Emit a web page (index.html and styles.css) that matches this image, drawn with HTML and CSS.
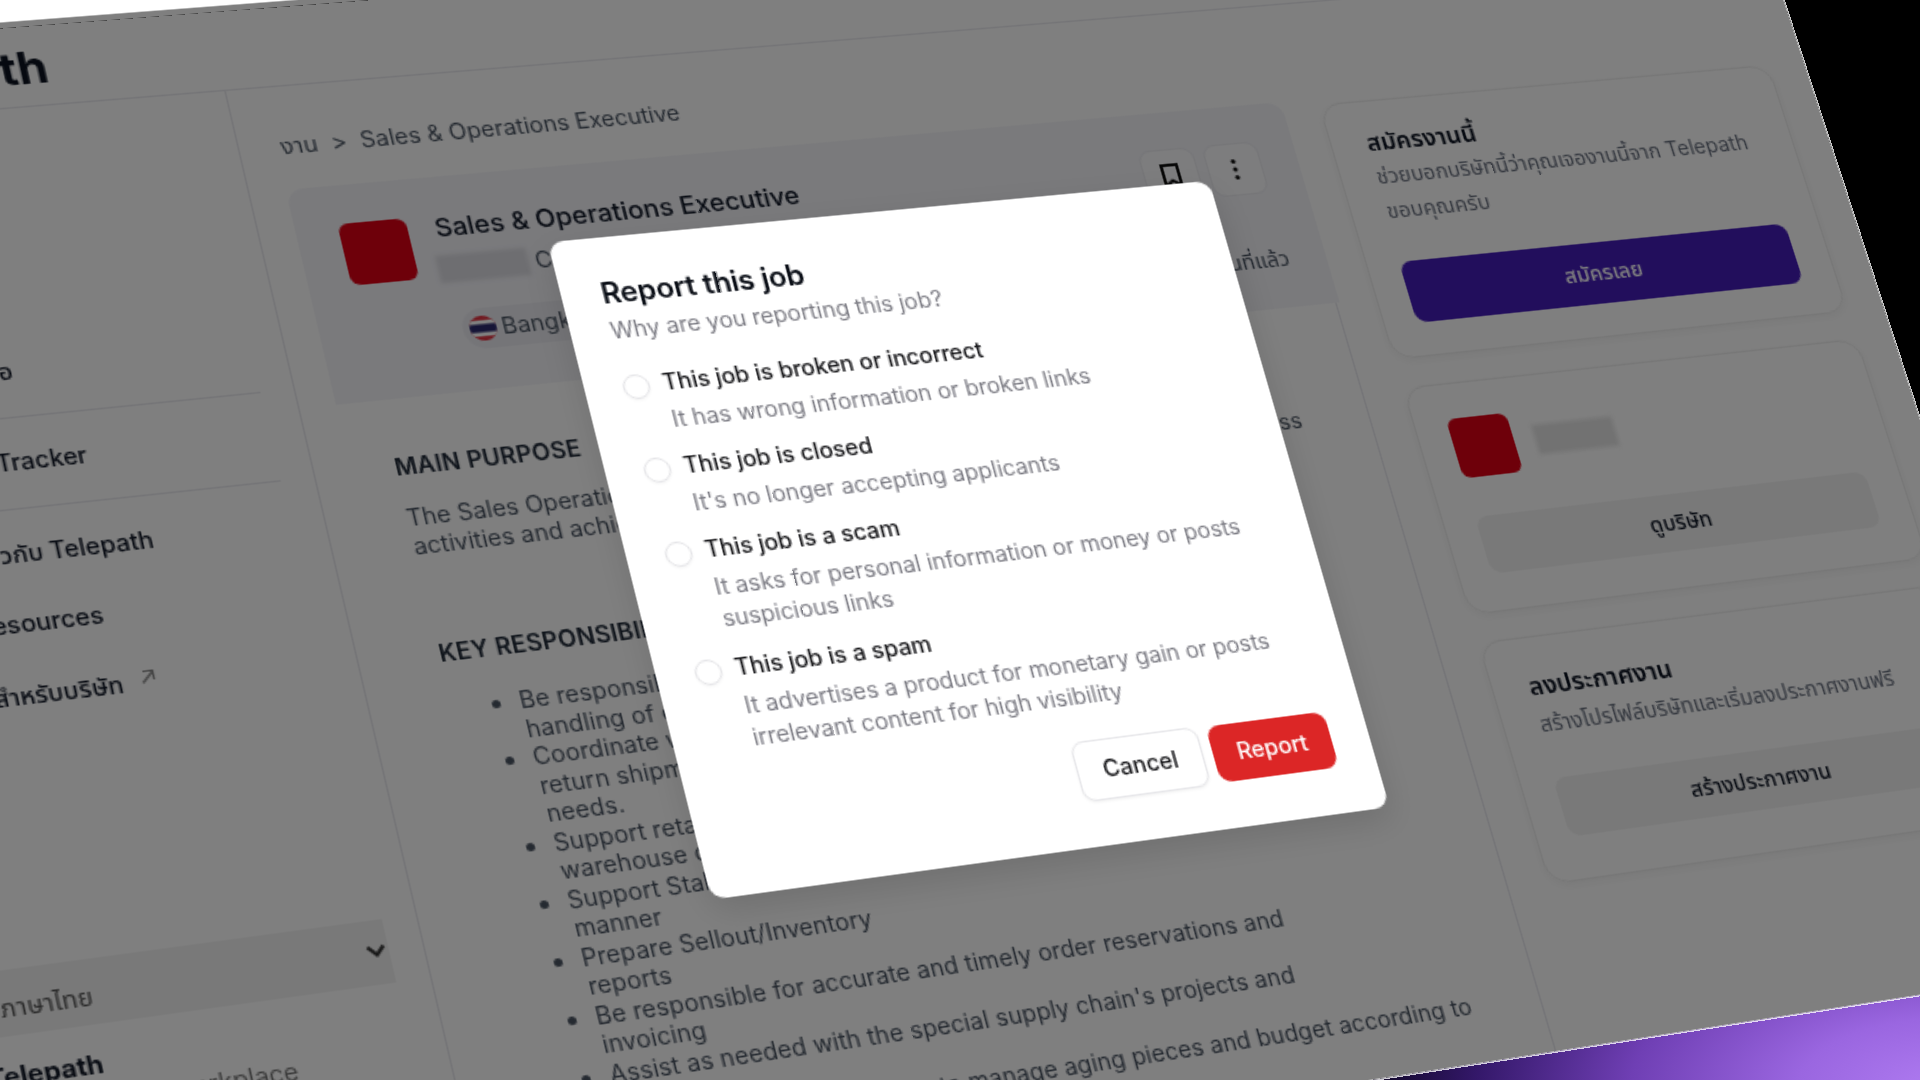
FILE: index.html
```html
<!DOCTYPE html>
<html lang="th">
<head>
<meta charset="utf-8">
<title>Telepath</title>
<link rel="stylesheet" href="styles.css">
</head>
<body>
<div class="scene">
<div class="stage">
  <div class="strip"></div>
  <header class="topbar"><span class="brand">Telepath</span></header>
  <div class="layout">
    <aside class="sidebar">
      <div class="nav-item nav-first">ประวัติย่อ</div>
      <div class="nav-line nav-line-a"></div>
      <div class="nav-item nav-tracker">Job Tracker</div>
      <div class="nav-line nav-line-b"></div>
      <div class="nav-item nav-about">เกี่ยวกับ Telepath</div>
      <div class="nav-item nav-res">Resources</div>
      <div class="nav-item nav-co">สำหรับบริษัท
        <svg class="ext" viewBox="0 0 12 12"><path d="M3 9.5 9.5 3M4 2.5h5.5V8"/></svg>
      </div>
      <div class="lang">
        <span class="lang-text">ภาษาไทย</span>
        <svg class="chev" viewBox="0 0 14 14"><path d="M2.5 4.5 7 9.5l4.5-5"/></svg>
      </div>
      <div class="foot-name">Telepath</div>
      <div class="foot-sub">The modern workplace</div>
    </aside>
    <main class="main">
      <div class="crumbs"><span>งาน</span><span class="crumb-sep">&gt;</span><span>Sales &amp; Operations Executive</span></div>
      <section class="job-head">
        <div class="job-logo"></div>
        <div class="job-info">
          <div class="job-title">Sales &amp; Operations Executive</div>
          <div class="job-company"><span class="smudge"></span><span>Company</span></div>
          <div class="pill">
            <svg class="flag" viewBox="0 0 16 16"><defs><clipPath id="fc"><circle cx="8" cy="8" r="8"/></clipPath></defs><g clip-path="url(#fc)"><rect width="16" height="16" fill="#e2303f"/><rect y="2.8" width="16" height="10.4" fill="#fff"/><rect y="5.4" width="16" height="5.2" fill="#2d2a6e"/></g></svg>
            <span>Bangkok</span>
          </div>
        </div>
        <div class="job-side">
          <div class="job-actions">
            <div class="icon-btn"><svg viewBox="0 0 20 20"><path d="M5 3h10v14l-5-3.4L5 17z"/></svg></div>
            <div class="icon-btn"><svg viewBox="0 0 20 20"><circle class="dot" cx="10" cy="4.5" r="1.5"/><circle class="dot" cx="10" cy="10" r="1.5"/><circle class="dot" cx="10" cy="15.5" r="1.5"/></svg></div>
          </div>
          <div class="job-time">3 วันที่แล้ว</div>
        </div>
      </section>
      <section class="job-body">
        <h3 class="sec-title">MAIN PURPOSE</h3>
        <p class="para">The Sales Operations Executive supports the sales team across all related business<br>activities and achieves the targets set by the company.</p>
        <h3 class="sec-title sec-key">KEY RESPONSIBILITIES</h3>
        <ul class="duties">
          <li>Be responsible for order processing and the accurate<br>handling of customer requests</li>
          <li>Coordinate with logistics on deliveries and<br>return shipments to serve customer<br>needs.</li>
          <li>Support retail stores and<br>warehouse operations</li>
          <li>Support Stakeholders in a timely<br>manner</li>
          <li>Prepare Sellout/Inventory<br>reports</li>
          <li>Be responsible for accurate and timely order reservations and<br>invoicing</li>
          <li>Assist as needed with the special supply chain's projects and<br>agendas</li>
          <li>Coordinating with the team to manage aging pieces and budget according to<br>business plan across all</li>
        </ul>
      </section>
    </main>
    <aside class="rail">
      <section class="card card-apply">
        <h4 class="card-title">สมัครงานนี้</h4>
        <p class="card-sub">ช่วยบอกบริษัทนี้ว่าคุณเจองานนี้จาก Telepath<br>ขอบคุณครับ</p>
        <div class="btn-primary">สมัครเลย</div>
      </section>
      <section class="card card-company">
        <div class="co-row"><div class="co-logo"></div><div class="smudge smudge-co"></div></div>
        <div class="btn-soft btn-co">ดูบริษัท</div>
      </section>
      <section class="card card-post">
        <h4 class="card-title">ลงประกาศงาน</h4>
        <p class="card-sub card-sub-one">สร้างโปรไฟล์บริษัทและเริ่มลงประกาศงานฟรี</p>
        <div class="btn-soft btn-post">สร้างประกาศงาน</div>
      </section>
    </aside>
  </div>
  <div class="scrim"></div>
  <div class="modal">
    <h2 class="modal-title">Report this job</h2>
    <p class="modal-sub">Why are you reporting this job?</p>
    <div class="options">
      <div class="option"><span class="radio"></span><div><div class="opt-label">This job is broken or incorrect</div><div class="opt-desc">It has wrong information or broken links</div></div></div>
      <div class="option"><span class="radio"></span><div><div class="opt-label">This job is closed</div><div class="opt-desc">It's no longer accepting applicants</div></div></div>
      <div class="option"><span class="radio"></span><div><div class="opt-label">This job is a scam</div><div class="opt-desc">It asks for personal information or money or posts<br>suspicious links</div></div></div>
      <div class="option"><span class="radio"></span><div><div class="opt-label">This job is a spam</div><div class="opt-desc">It advertises a product for monetary gain or posts<br>irrelevant content for high visibility</div></div></div>
    </div>
    <div class="modal-actions"><div class="btn-cancel">Cancel</div><div class="btn-report">Report</div></div>
  </div>
</div>
</div>
</body>
</html>
```
FILE: styles.css
```css
* { box-sizing: border-box; }
html, body { margin: 0; height: 100%; }
body {
  width: 1920px; height: 1080px; overflow: hidden; position: relative;
  background: radial-gradient(ellipse 640px 300px at 1950px 1090px, #b07cf2 0%, #9a66e0 24%, #6f3fb4 50%, #34186a 74%, #0c0520 92%, #000 100%), #000;
  font-family: Inter, "Noto Sans", "Noto Sans Thai", "DejaVu Sans", sans-serif;
  color: #0f172a;
}
.scene { position: absolute; inset: 0; filter: blur(0.45px); }
.stage {
  position: absolute; left: 0; top: 0; width: 1247px; height: 750px;
  background: #fff; transform-origin: 0 0;
  transform: matrix3d(1.71796,-0.12881,0,0.00010631, 0.32909,1.49339,0,-0.00008786, 0,0,1,0, -212.09,44.18,0,0.97096);
  font-size: 14px; line-height: 20px;
  outline: 1.2px solid rgba(255,255,255,.8);
}
.strip { position: absolute; left: 0; right: 0; top: -70px; height: 70px; background: #fff; }
.scrim { position: absolute; inset: -4px 0 0 0; background: rgba(0,0,0,.5); }

.topbar { height: 52px; border-bottom: 1px solid #e9e9ee; padding: 9px 0 0 26px; }
.brand { font-size: 28px; line-height: 36px; font-weight: 700; color: #0b1220; }
.layout { display: grid; grid-template-columns: 244px 641px 362px; height: 698px; }

.sidebar { display: flex; flex-direction: column; padding: 0 19px 0 16px; border-right: 1px solid #e9e9ee; font-weight: 500; color: #111827; }
.nav-item { padding-left: 24px; height: 20px; white-space: nowrap; display: flex; align-items: center; gap: 8px; }
.nav-first { margin-top: 155px; padding-left: 20px; }
.nav-line { height: 1px; background: #e9e9ee; }
.nav-line-a { margin-top: 18px; }
.nav-tracker { margin-top: 17px; }
.nav-line-b { margin-top: 18px; }
.nav-about { margin-top: 17px; padding-left: 23px; }
.nav-res { margin-top: 22px; padding-left: 23px; }
.nav-co { margin-top: 23px; padding-left: 25px; }
.ext { width: 12px; height: 12px; fill: none; stroke: #8a8a8a; stroke-width: 1.2; margin-top: -6px; }
.lang { margin: 147px 0 0 -30px; height: 38px; display: flex; align-items: center; justify-content: space-between; padding: 5px 0 0 30px; background: #f3f3f3; font-weight: 400; color: #555; }
.lang-text { margin-left: -6px; }
.chev { width: 14px; height: 14px; fill: none; stroke: #333; stroke-width: 2; margin-top: -8px; }
.foot-name { margin-top: 13px; font-size: 14.5px; font-weight: 700; margin-left: -20px; }
.foot-sub { line-height: 18px; margin: 1px 0 0 -9px; font-size: 14px; font-weight: 400; color: #777; white-space: nowrap; }

.main { padding-top: 28px; color: #374151; display: flex; flex-direction: column; }
.crumbs { display: flex; gap: 8px; margin: 1px 0 0 24px; color: #4b5563; white-space: nowrap; }
.crumb-sep { padding: 0; }
.job-head { margin: 18px -2px 0 21px; height: 139px; background: #f4f4f9; border-radius: 10px 10px 0 0; padding: 25px 24px 25px 25px; display: flex; gap: 16px; }
.job-logo { width: 40px; height: 40px; border-radius: 6px; background: #dc0014; flex: none; }
.job-info { flex: 1; margin-top: -2px; }
.job-title { font-size: 16px; font-weight: 500; color: #111827; letter-spacing: -.05px; }
.job-company { display: flex; align-items: center; gap: 4px; margin-top: 7px; color: #4b5563; }
.smudge { display: block; width: 54px; height: 18px; margin-left: -4px; background: #dcdce2; filter: blur(1.5px); }
.pill { display: inline-flex; align-items: center; gap: 3px; height: 26px; margin-top: 17px; margin-left: 2px; padding: 0 10px 0 4px; background: #ebebf0; border-radius: 13px; color: #4b5563; }
.flag { width: 16px; height: 16px; }
.job-side { display: flex; flex-direction: column; align-items: flex-end; }
.job-actions { display: flex; gap: 6px; }
.icon-btn { width: 36px; height: 36px; border: 1px solid #ececf1; border-radius: 8px; background: #fafafc; display: flex; align-items: center; justify-content: center; }
.icon-btn svg { width: 20px; height: 20px; fill: none; stroke: #111; stroke-width: 2; }
.icon-btn .dot { fill: #111; stroke: none; }
.job-time { margin-top: 35px; color: #4b5563; white-space: nowrap; }

.job-body { flex: 1; padding: 33px 0 0 46px; border-right: 1px solid #e9e9ee; }
.sec-title { margin: 0; font-size: 14px; line-height: 20px; font-weight: 600; letter-spacing: .2px; color: #1f2937; white-space: nowrap; }
.sec-key { margin-top: 49px; }
.para { margin: 13px 0 0; line-height: 17.5px; color: #4b5563; white-space: nowrap; }
.duties { margin: 15px 0 0; padding: 0 0 0 39px; line-height: 17.5px; letter-spacing: .07px; color: #4b5563; white-space: nowrap; }

.rail { padding: 71px 0 0 26px; display: flex; flex-direction: column; align-items: flex-start; }
.card { width: 311px; border: 1px solid #eeeeee; border-radius: 14px; box-shadow: 0 2px 6px rgba(0,0,0,.05); padding: 0 23px 0 21px; }
.card-title { margin: 0; padding-left: 2px; font-size: 16px; line-height: 24px; font-weight: 600; color: #0b1220; }
.card-sub { margin: 0; padding-left: 2px; line-height: 24px; color: #6b7280; white-space: nowrap; }
.card-apply { height: 177px; padding-top: 16px; }
.btn-primary { margin-top: 23px; height: 42px; border-radius: 8px; background: #441cb8; color: #fff; font-weight: 500; display: flex; align-items: center; justify-content: center; }
.card-company { height: 153px; margin-top: 19px; padding-top: 23px; }
.co-row { display: flex; gap: 14px; align-items: flex-start; }
.co-logo { width: 40px; height: 40px; border-radius: 6px; background: #dc0014; }
.smudge-co { width: 54px; height: 20px; margin: 10px 0 0; background: #e4e4e4; }
.btn-soft { height: 38px; border-radius: 8px; background: #f3f3f3; color: #111827; font-weight: 500; display: flex; align-items: center; justify-content: center; }
.btn-co { margin-top: 26px; }
.card-post { height: 158px; margin-top: 18px; padding-top: 19px; }
.card-sub-one { line-height: 20px; margin-top: 3px; }
.btn-post { margin-top: 25px; }

.modal {
  position: absolute; left: 410px; top: 168px; width: 416px; height: 418px;
  background: #fff; border-radius: 9px; padding: 23px 24px 0 23px;
  box-shadow: 0 8px 20px rgba(0,0,0,.12);
  display: flex; flex-direction: column;
}
.modal-title { margin: 0; padding-left: 1px; font-size: 18px; line-height: 28px; font-weight: 600; color: #0b0f17; letter-spacing: -.15px; }
.modal-sub { margin: 0; padding-left: 1px; color: #7c7c84; letter-spacing: -.07px; }
.options { margin-top: 16px; display: flex; flex-direction: column; gap: 10.2px; }
.option { display: flex; gap: 8px; }
.radio { flex: none; width: 16px; height: 16px; margin-top: 3px; border: 1.2px solid #e4e4e7; border-radius: 50%; box-shadow: 0 1px 2px rgba(0,0,0,.04); }
.opt-label { font-weight: 500; color: #18181b; letter-spacing: -.07px; }
.opt-desc { margin-top: 4px; color: #7c7c84; white-space: nowrap; letter-spacing: -.07px; }
.modal-actions { margin-top: 18.5px; display: flex; justify-content: flex-end; align-items: center; gap: 6px; font-weight: 500; }
.btn-cancel, .btn-report { border-radius: 8px; display: flex; align-items: center; justify-content: center; }
.btn-cancel { width: 79px; height: 38px; background: #fff; border: 1px solid #e7e7ea; color: #18181b; box-shadow: 0 1px 2px rgba(0,0,0,.05); }
.btn-report { width: 75px; height: 36px; background: #dc2626; color: #fff; }
```
